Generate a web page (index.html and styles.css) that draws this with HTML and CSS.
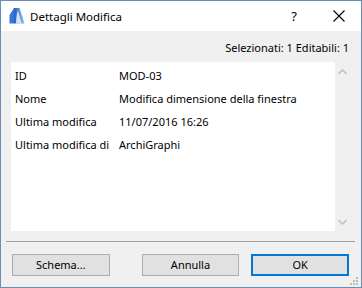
FILE: index.html
```html
<!DOCTYPE html>
<html lang="it">
<head>
<meta charset="utf-8">
<title>Dettagli Modifica</title>
<link rel="stylesheet" href="styles.css">
</head>
<body>
<div class="window">
  <div class="titlebar">
    <svg class="app-icon" width="16" height="17" viewBox="0 0 16 17">
      <defs>
        <linearGradient id="g1" x1="0" y1="0" x2="1" y2="0">
          <stop offset="0" stop-color="#1f5fc8"/>
          <stop offset="1" stop-color="#8ec2f5"/>
        </linearGradient>
      </defs>
      <path d="M0.5 16.5 L0.5 8 L5 1 L5 16.5 Z" fill="#3a74d6"/>
      <path d="M5 16.5 L5 1 L10.5 1 L15.5 16.5 Z" fill="url(#g1)"/>
      <path d="M7 16.5 C7 11 8 6 9 3.5 C10 7 11.5 12 12.5 16.5 Z" fill="#ffffff" opacity="0.75"/>
    </svg>
    <span class="title">Dettagli Modifica</span>
    <span class="help">?</span>
    <svg class="close" width="12" height="12" viewBox="0 0 12 12">
      <path d="M0.5 0.5 L11.5 11.5 M11.5 0.5 L0.5 11.5" stroke="#000" stroke-width="1.1" fill="none"/>
    </svg>
  </div>
  <div class="content">
    <div class="status">Selezionati: 1 Editabili: 1</div>
    <div class="listbox">
      <div class="rows">
        <div class="row"><span class="label">ID</span><span class="value">MOD-03</span></div>
        <div class="row"><span class="label">Nome</span><span class="value">Modifica dimensione della finestra</span></div>
        <div class="row"><span class="label">Ultima modifica</span><span class="value">11/07/2016 16:26</span></div>
        <div class="row"><span class="label">Ultima modifica di</span><span class="value">ArchiGraphi</span></div>
      </div>
      <div class="scrollbar">
        <svg class="arrow" width="9" height="6" viewBox="0 0 9 6"><path d="M0.5 5 L4.5 1 L8.5 5" stroke="#c2c2c2" stroke-width="1.6" fill="none"/></svg>
        <svg class="arrow" width="9" height="6" viewBox="0 0 9 6"><path d="M0.5 1 L4.5 5 L8.5 1" stroke="#c2c2c2" stroke-width="1.6" fill="none"/></svg>
      </div>
    </div>
    <div class="separator"></div>
    <div class="buttons">
      <button class="btn">Schema...</button>
      <button class="btn">Annulla</button>
      <button class="btn btn-default">OK</button>
    </div>
    <svg class="grip" width="9" height="9" viewBox="0 0 9 9">
      <rect x="6" y="0" width="2" height="2" fill="#bdbdbd"/>
      <rect x="3" y="3" width="2" height="2" fill="#bdbdbd"/>
      <rect x="6" y="3" width="2" height="2" fill="#bdbdbd"/>
      <rect x="0" y="6" width="2" height="2" fill="#bdbdbd"/>
      <rect x="3" y="6" width="2" height="2" fill="#bdbdbd"/>
      <rect x="6" y="6" width="2" height="2" fill="#bdbdbd"/>
    </svg>
  </div>
</div>
</body>
</html>
```

FILE: styles.css
```css
* { box-sizing: border-box; }
html, body {
  margin: 0;
  padding: 0;
  background: #ffffff;
}
body {
  font-family: "Noto Sans", "Open Sans", sans-serif;
  font-size: 11px;
  color: #000;
}
.window {
  width: 362px;
  height: 288px;
  border: 1px solid #6a8db6;
  display: flex;
  flex-direction: column;
  background: #f0f0f0;
}
.titlebar {
  height: 30px;
  background: #ffffff;
  display: flex;
  align-items: center;
  padding-left: 8px;
  flex: none;
}
.app-icon {
  margin-top: -1px;
  flex: none;
}
.title {
  margin-left: 5px;
  font-size: 11.5px;
  color: #000;
}
.help {
  margin-left: auto;
  font-size: 13px;
  margin-right: 36px;
}
.close {
  margin-right: 16px;
}
.content {
  flex: 1;
  position: relative;
  display: flex;
  flex-direction: column;
}
.status {
  padding-top: 9px;
  line-height: 16px;
  height: 25px;
  text-align: right;
  padding-right: 12px;
  margin-bottom: 6px;
}
.listbox {
  margin-left: 10px;
  width: 339px;
  height: 169px;
  display: flex;
  flex: none;
}
.rows {
  flex: 1;
  background: #ffffff;
  padding-top: 2px;
}
.row {
  display: flex;
  height: 23px;
  line-height: 23px;
  padding-left: 4px;
}
.label {
  width: 104px;
  flex: none;
}
.scrollbar {
  width: 15px;
  flex: none;
  background: #f0f0f0;
  display: flex;
  flex-direction: column;
  justify-content: space-between;
  align-items: center;
  padding: 7px 0 6px 0;
}
.separator {
  margin-top: 10px;
  margin-left: 5px;
  width: 349px;
  height: 1px;
  background: #a0a0a0;
  flex: none;
}
.buttons {
  margin-top: 12px;
  display: flex;
  padding-left: 11px;
}
.btn {
  width: 98px;
  height: 22px;
  border: 1px solid #adadad;
  background: #e1e1e1;
  font-family: "Noto Sans", "Open Sans", sans-serif;
  font-size: 11px;
  color: #000;
  padding: 0;
  line-height: 18px;
  margin-right: 32px;
}
.btn + .btn {
  margin-right: 12px;
}
.btn-default {
  border: 2px solid #0078d7;
  margin-right: 0;
}
.grip {
  position: absolute;
  right: 2px;
  bottom: 1px;
}
```
